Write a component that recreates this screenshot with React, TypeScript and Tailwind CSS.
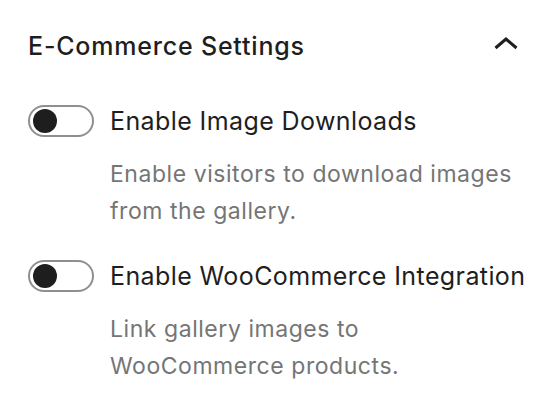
import React from "react";

function Toggle() {
  return (
    <span className="flex h-[32px] w-[66px] shrink-0 items-center rounded-full border-2 border-[#8f8f8f] bg-white px-[3px]">
      <span className="h-[24px] w-[24px] rounded-full bg-[#1e1e1e]" />
    </span>
  );
}

function Setting({ label, help }: { label: string; help: string }) {
  return (
    <div className="flex flex-col">
      <div className="flex items-center gap-[16px]">
        <Toggle />
        <span className="text-[25px] leading-[32px] tracking-[0.4px] text-[#1e1e1e]">
          {label}
        </span>
      </div>
      <p className="mt-[19px] pl-[82px] text-[23px] leading-[37px] tracking-[0.55px] text-[#757575]">
        {help}
      </p>
    </div>
  );
}

export default function App() {
  return (
    <div
      className="h-[410px] w-[560px] bg-white px-[28px] pt-[30px]"
      style={{ fontFamily: "Inter, 'Noto Sans', sans-serif" }}
    >
      <div className="flex items-center justify-between">
        <h2 className="text-[25px] font-medium leading-[32px] tracking-[0.8px] text-[#1e1e1e]">
          E-Commerce Settings
        </h2>
        <svg width="26" height="13" viewBox="0 0 26 13" className="mb-[6px] mr-[13px]">
          <path d="M2.5 11 13 2l10.5 9" fill="none" stroke="#1e1e1e" strokeWidth="3" />
        </svg>
      </div>
      <div className="mt-[43px] flex flex-col gap-[30px]">
        <Setting
          label="Enable Image Downloads"
          help="Enable visitors to download images from the gallery."
        />
        <Setting
          label="Enable WooCommerce Integration"
          help="Link gallery images to WooCommerce products."
        />
      </div>
    </div>
  );
}
